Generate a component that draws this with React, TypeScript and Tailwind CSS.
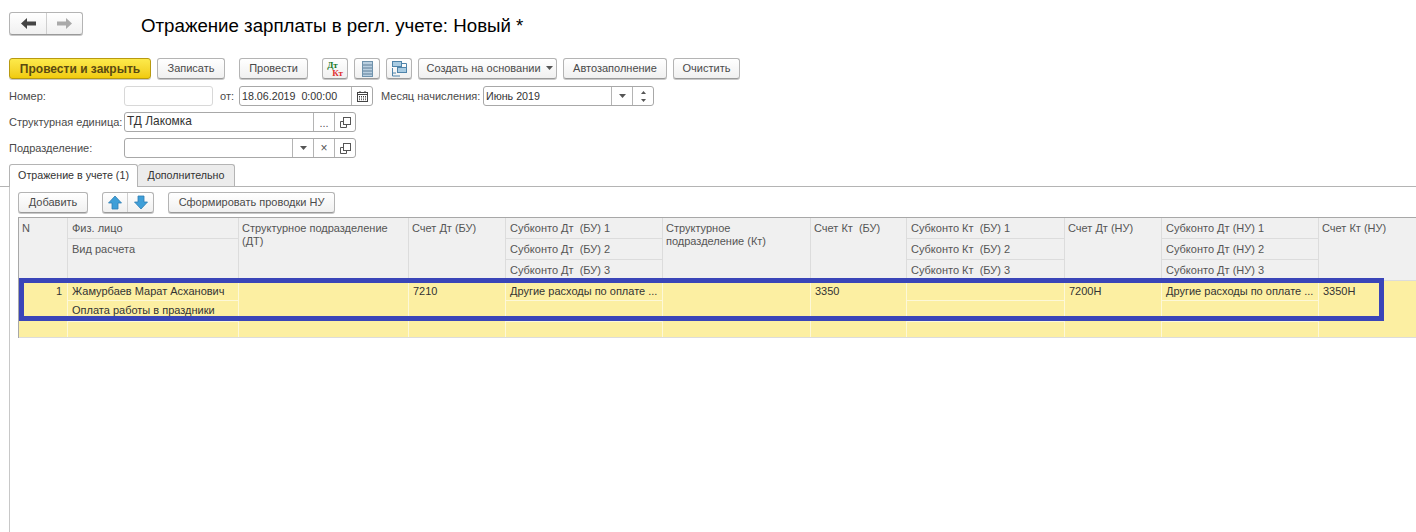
import React from "react";

const btn =
  "flex items-center justify-center h-[21px] rounded-[3px] border border-[#b4b4b4] border-b-[#9a9a9a] bg-gradient-to-b from-white to-[#f0f0f0] shadow-[0_1px_0_#c8c8c8] text-[11px] text-[#4a4a4a]";

function Btn({ w, children }: { w: string; children: React.ReactNode }) {
  return <div className={`${btn} ${w}`}>{children}</div>;
}

const CopyIcon = () => (
  <svg width="13" height="13" viewBox="0 0 13 13" fill="none" stroke="#555" strokeWidth="1">
    <rect x="4.5" y="1.5" width="7" height="7" />
    <path d="M4.5 5.5H1.5V11.5H7.5V8.5" />
  </svg>
);

const Caret = () => (
  <svg width="7" height="4" viewBox="0 0 7 4">
    <path d="M0 0H7L3.5 4Z" fill="#555" />
  </svg>
);

const Calendar = () => (
  <svg width="13" height="13" viewBox="0 0 13 13" fill="none" stroke="#444">
    <rect x="1.5" y="2.5" width="10" height="9" />
    <path d="M1.5 4.5H11.5M4 1V3M9 1V3" />
    <path d="M3 6.5H10M3 8H10M3 9.7H10" strokeDasharray="1 1" />
  </svg>
);

function Seg({ w, children }: { w: string; children?: React.ReactNode }) {
  return (
    <div className={`${w} h-full border-l border-[#b4b4b4] flex items-center justify-center text-[#555]`}>
      {children}
    </div>
  );
}

function Field({
  w,
  value,
  size,
  children,
}: {
  w: string;
  value?: string;
  size: string;
  children?: React.ReactNode;
}) {
  return (
    <div className={`${w} ${size} h-[20px] flex items-center rounded-[3px] border border-[#a8a8a8] bg-white text-[#333]`}>
      <div className="flex-1 pl-[2px] whitespace-pre overflow-hidden">{value}</div>
      {children}
    </div>
  );
}

const Label = ({ w, children }: { w: string; children: React.ReactNode }) => (
  <div className={`${w} text-[11px] text-[#4a4a4a] whitespace-nowrap shrink-0`}>{children}</div>
);

const ArrowUp = () => (
  <svg width="14" height="15" viewBox="0 0 14 15">
    <path d="M7 1L13.5 8H10V14H4V8H.5Z" fill="#3f9fd8" stroke="#2d7fb5" strokeWidth=".8" />
  </svg>
);
const ArrowDown = () => (
  <svg width="14" height="15" viewBox="0 0 14 15">
    <path d="M7 14L13.5 7H10V1H4V7H.5Z" fill="#3f9fd8" stroke="#2d7fb5" strokeWidth=".8" />
  </svg>
);

type Col = { w: string; head: string[]; rows: string[] };

const cols: Col[] = [
  { w: "w-[49px]", head: ["N"], rows: ["1"] },
  {
    w: "w-[171px]",
    head: ["Физ. лицо", "Вид расчета"],
    rows: ["Жамурбаев Марат Асханович", "Оплата работы в праздники", ""],
  },
  { w: "w-[170px]", head: ["Структурное подразделение (ДТ)"], rows: [""] },
  { w: "w-[97px]", head: ["Счет Дт (БУ)"], rows: ["7210"] },
  {
    w: "w-[157px]",
    head: ["Субконто Дт  (БУ) 1", "Субконто Дт  (БУ) 2", "Субконто Дт  (БУ) 3"],
    rows: ["Другие расходы по оплате ...", "", ""],
  },
  { w: "w-[148px]", head: ["Структурное подразделение (Кт)"], rows: [""] },
  { w: "w-[96px]", head: ["Счет Кт  (БУ)"], rows: ["3350"] },
  {
    w: "w-[158px]",
    head: ["Субконто Кт  (БУ) 1", "Субконто Кт  (БУ) 2", "Субконто Кт  (БУ) 3"],
    rows: ["", "", ""],
  },
  { w: "w-[97px]", head: ["Счет Дт (НУ)"], rows: ["7200Н"] },
  {
    w: "w-[157px]",
    head: ["Субконто Дт (НУ) 1", "Субконто Дт (НУ) 2", "Субконто Дт (НУ) 3"],
    rows: ["Другие расходы по оплате ...", "", ""],
  },
  { w: "w-[98px]", head: ["Счет Кт (НУ)"], rows: ["3350Н"] },
];

const headH = ["h-[21px]", "h-[21px]", "h-[20px]"];
const rowH = ["h-[20px]", "h-[21px]", "h-[16px]"];
const rowPad = ["pt-[3px]", "pt-[2px]", "pt-[3px]"];

function HeadCol({ c, last }: { c: Col; last: boolean }) {
  const n = c.head.length;
  return (
    <div className={`${c.w} shrink-0 flex flex-col ${last ? "" : "border-r border-[#dcdcdc]"}`}>
      {c.head.map((t, i) => {
        const fill = i === n - 1;
        return (
          <div
            key={i}
            className={`${fill ? "flex-1" : `${headH[i]} border-b border-[#dcdcdc]`} ${
              n > 1 ? "pl-[4px]" : "pl-[3px] pr-2"
            } pt-[4px] leading-[13px] whitespace-pre-wrap`}
          >
            {t}
          </div>
        );
      })}
    </div>
  );
}

function DataCol({ c, first, last }: { c: Col; first: boolean; last: boolean }) {
  return (
    <div className={`${c.w} shrink-0 flex flex-col ${last ? "" : "border-r border-[#fdf8d8]"}`}>
      {c.rows.map((t, i) => {
        const fill = i === c.rows.length - 1;
        return (
          <div
            key={i}
            className={`${fill ? "flex-1" : `${rowH[i]} border-b border-[#fdf8d8]`} ${
              first ? "text-right pr-[5px]" : "pl-[4px]"
            } ${rowPad[i]} leading-[14px] whitespace-nowrap overflow-hidden text-[#333]`}
          >
            {t}
          </div>
        );
      })}
    </div>
  );
}

export default function App() {
  return (
    <div
      className="w-[1416px] h-[532px] overflow-hidden bg-white flex flex-col"
      style={{ fontFamily: '"Liberation Sans", Arial, sans-serif' }}
    >
      {/* top: navigation + title */}
      <div className="flex items-start h-[24px] mt-[12px] pl-[9px]">
        <div className="flex w-[74px] h-[23px] rounded-[3px] border border-[#b4b4b4] border-b-[#9a9a9a] bg-gradient-to-b from-white to-[#f0f0f0] shadow-[0_1px_0_#c8c8c8]">
          <div className="w-[37px] flex items-center justify-center border-r border-[#cfcfcf]">
            <svg width="15" height="11" viewBox="0 0 15 11">
              <path d="M0 5.5L6 0V3.5H15V7.5H6V11Z" fill="#444" />
            </svg>
          </div>
          <div className="flex-1 flex items-center justify-center">
            <svg width="15" height="11" viewBox="0 0 15 11">
              <path d="M15 5.5L9 0V3.5H0V7.5H9V11Z" fill="#aaa" />
            </svg>
          </div>
        </div>
        <div className="ml-[58px] mt-[2px] text-[18.7px] text-black leading-[24px] whitespace-nowrap">
          Отражение зарплаты в регл. учете: Новый *
        </div>
      </div>

      {/* command bar */}
      <div className="flex items-start h-[22px] mt-[22px] pl-[9px]">
        <div className="w-[142px] h-[21px] flex items-center justify-center rounded-[3px] border border-[#b89a10] bg-gradient-to-b from-[#fdea4a] to-[#f0cb08] shadow-[0_1px_0_#c8c8c8] text-[12px] font-bold text-[#5a4a10]">
          Провести и закрыть
        </div>
        <Btn w="w-[68px] ml-[6px]">Записать</Btn>
        <Btn w="w-[69px] ml-[14px]">Провести</Btn>
        <Btn w="w-[26px] ml-[14px]">
          <div className="flex flex-col items-center text-[9px] font-bold leading-[8px]" style={{ fontFamily: '"Liberation Serif", serif' }}>
            <span className="text-[#1a7a2a] -ml-[5px]">Дт</span>
            <span className="text-[#e03030] ml-[5px]">Кт</span>
          </div>
        </Btn>
        <Btn w="w-[26px] ml-[6px]">
          <svg width="11" height="16" viewBox="0 0 11 16">
            <rect x=".5" y=".5" width="10" height="15" fill="#b9cfe0" stroke="#6f93ad" />
            <path d="M1 4H10M1 7H10M1 10H10M1 13H10" stroke="#5f7f98" />
          </svg>
        </Btn>
        <Btn w="w-[26px] ml-[6px]">
          <svg width="17" height="16" viewBox="0 0 17 16" fill="none" stroke="#4f84aa">
            <rect x="1.5" y=".5" width="9" height="5" fill="#a8cbe2" />
            <rect x="6.5" y="6.5" width="9" height="5" fill="#a8cbe2" />
            <path d="M11 2.5H15.5V6M1.5 7V15H9M1.5 12H5" />
          </svg>
        </Btn>
        <Btn w="w-[139px] ml-[6px] pl-[4px]">
          <span>Создать на основании</span>
          <span className="ml-[5px] mb-[1px]"><Caret /></span>
        </Btn>
        <Btn w="w-[104px] ml-[6px]">Автозаполнение</Btn>
        <Btn w="w-[67px] ml-[6px]">Очистить</Btn>
      </div>

      {/* form rows */}
      <div className="flex items-center h-[20px] mt-[6px] pl-[9px]">
        <Label w="w-[115px]">Номер:</Label>
        <div className="w-[89px] h-[20px] rounded-[3px] border border-[#d8d8d8] bg-white" />
        <Label w="w-[19px] ml-[7px]">от:</Label>
        <Field w="w-[134px]" size="text-[10.7px]" value="18.06.2019  0:00:00">
          <Seg w="w-[21px]"><Calendar /></Seg>
        </Field>
        <Label w="w-[102px] ml-[8px]">Месяц начисления:</Label>
        <Field w="w-[171px]" size="text-[10.7px]" value="Июнь 2019">
          <Seg w="w-[21px]"><Caret /></Seg>
          <Seg w="w-[21px]">
            <div className="flex flex-col items-center gap-[5px]">
              <svg width="5" height="3" viewBox="0 0 5 3"><path d="M0 3H5L2.5 0Z" fill="#555" /></svg>
              <svg width="5" height="3" viewBox="0 0 5 3"><path d="M0 0H5L2.5 3Z" fill="#555" /></svg>
            </div>
          </Seg>
        </Field>
      </div>

      <div className="flex items-center h-[20px] mt-[6px] pl-[9px]">
        <Label w="w-[115px]">Структурная единица:</Label>
        <Field w="w-[232px]" size="text-[11.9px]" value="ТД Лакомка">
          <Seg w="w-[21px]"><span className="text-[11px] leading-[11px] mt-[3px]">...</span></Seg>
          <Seg w="w-[21px]"><CopyIcon /></Seg>
        </Field>
      </div>

      <div className="flex items-center h-[20px] mt-[6px] pl-[9px]">
        <Label w="w-[115px]">Подразделение:</Label>
        <Field w="w-[232px]" size="text-[11.9px]">
          <Seg w="w-[21px]"><Caret /></Seg>
          <Seg w="w-[21px]"><span className="text-[12px] leading-[12px]">×</span></Seg>
          <Seg w="w-[21px]"><CopyIcon /></Seg>
        </Field>
      </div>

      {/* tabs */}
      <div className="flex items-end h-[23px] mt-[6px] pl-[9px] border-b border-[#b4b4b4] text-[10.7px]">
        <div className="w-[129px] h-[23px] -mb-[1px] pb-[2px] bg-white border border-b-0 border-[#b4b4b4] rounded-t-[3px] flex items-center justify-center text-[#333]">
          Отражение в учете (1)
        </div>
        <div className="w-[97px] h-[22px] pb-[1px] bg-[#ececec] border border-b-0 border-l-0 border-[#b4b4b4] rounded-t-[3px] flex items-center justify-center text-[#333]">
          Дополнительно
        </div>
      </div>

      {/* tab panel */}
      <div className="flex-1 ml-[9px] border-l border-[#c8c8c8] pl-[8px] pt-[5px] flex flex-col min-h-0">
        <div className="flex items-start h-[21px]">
          <Btn w="w-[70px]">Добавить</Btn>
          <div className="flex w-[52px] h-[21px] ml-[14px] rounded-[3px] border border-[#b4b4b4] border-b-[#9a9a9a] bg-gradient-to-b from-white to-[#f0f0f0] shadow-[0_1px_0_#c8c8c8]">
            <div className="w-[25px] flex items-center justify-center border-r border-[#cfcfcf]"><ArrowUp /></div>
            <div className="flex-1 flex items-center justify-center"><ArrowDown /></div>
          </div>
          <Btn w="w-[167px] ml-[14px]">Сформировать проводки НУ</Btn>
        </div>

        {/* table */}
        <div className="relative mt-[4px] border-l border-t border-[#a8a8a8] text-[11px] w-[1399px]">
          <div className="flex h-[62px] bg-[#f0f0f0] text-[#555] border-b border-[#dcdcdc] box-content">
            {cols.map((c, i) => (
              <HeadCol key={i} c={c} last={i === cols.length - 1} />
            ))}
          </div>
          <div className="flex h-[56px] bg-[#fcefa2] border-b border-[#dcdcdc] box-content">
            {cols.map((c, i) => (
              <DataCol key={i} c={c} first={i === 0} last={i === cols.length - 1} />
            ))}
          </div>
          {/* hand-drawn highlight frame over the row */}
          <div className="absolute left-0 top-[60px] w-[1365px] h-[43px] border-[5px] border-[#3a45b8]" />
        </div>
      </div>
    </div>
  );
}
